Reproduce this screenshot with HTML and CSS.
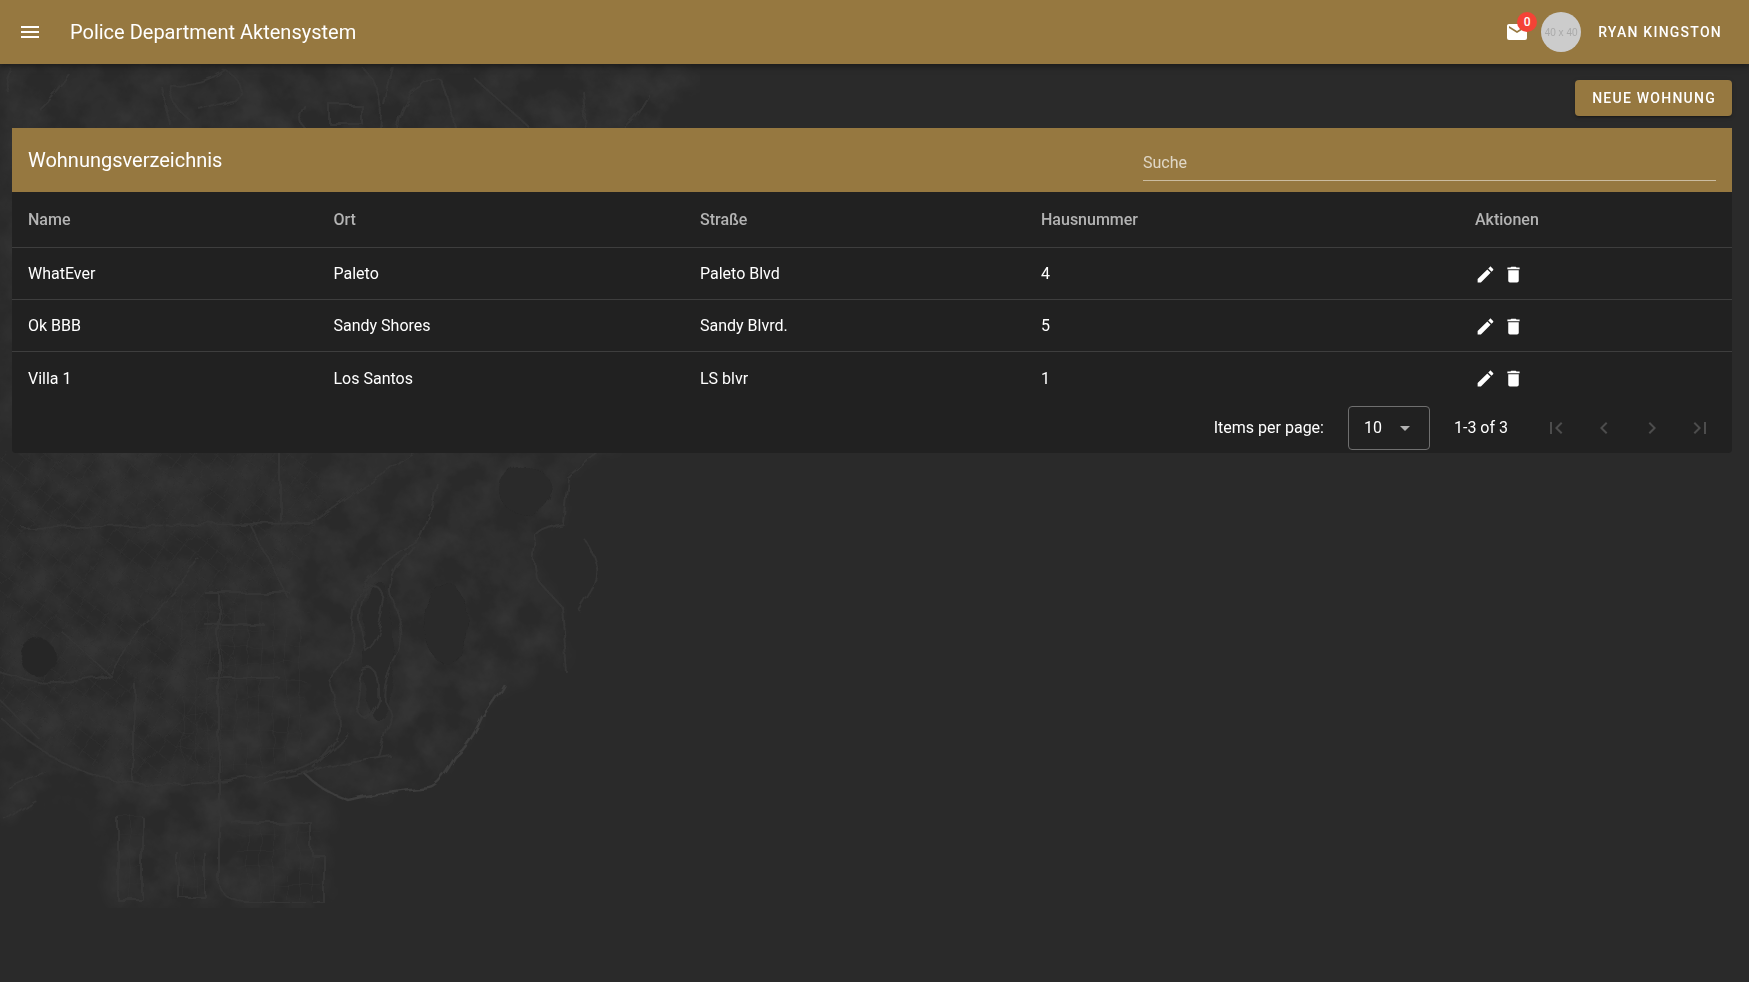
FILE: index.html
```html
<!DOCTYPE html>
<html lang="de">
<head>
    <meta charset="UTF-8">
    <meta name="viewport" content="width=device-width, initial-scale=1.0">
    <title>Police Department Aktensystem</title>
    <link rel="stylesheet" href="styles.css">
</head>
<body>
    <!-- Karte im Hintergrund -->
    <svg class="map" xmlns="http://www.w3.org/2000/svg" viewBox="0 0 1749 982" aria-hidden="true">
        <defs>
            <pattern id="blocks" width="15" height="15" patternUnits="userSpaceOnUse" patternTransform="rotate(38)">
                <path d="M0,0H15M0,0V15" fill="none" stroke="#323232" stroke-width="1.2" />
            </pattern>
            <pattern id="blocksFlat" width="13" height="17" patternUnits="userSpaceOnUse">
                <path d="M0,0H13M0,0V17" fill="none" stroke="#323232" stroke-width="1.2" />
            </pattern>
            <!-- fleckige Landfläche, Rand weich -->
            <filter id="mottle" x="0" y="0" width="100%" height="100%" color-interpolation-filters="sRGB">
                <feTurbulence type="fractalNoise" baseFrequency="0.03" numOctaves="5" seed="7" result="noise" />
                <feColorMatrix in="noise" type="matrix" values="0 0 0 0 1  0 0 0 0 1  0 0 0 0 1  0.1 0 0 0 -0.03" result="light" />
                <feGaussianBlur in="SourceAlpha" stdDeviation="10" result="soft" />
                <feComposite in="light" in2="soft" operator="in" />
            </filter>
            <!-- macht die Linien unruhig -->
            <filter id="wobble" x="0" y="0" width="100%" height="100%">
                <feTurbulence type="fractalNoise" baseFrequency="0.04" numOctaves="3" seed="3" result="wob" />
                <feDisplacementMap in="SourceGraphic" in2="wob" scale="9" />
                <feGaussianBlur stdDeviation="0.7" />
            </filter>
        </defs>

        <polygon class="land" filter="url(#mottle)" points="0,64 700,64 680,128 620,453 598,453 567,477 562,523 536,540 540,583 562,607 567,673 504,684 482,717 455,757 429,787 348,800 304,773 263,782 330,800 330,908 110,908 100,810 60,790 0,830" />

        <g filter="url(#wobble)">
            <!-- Stadtgebiet -->
            <polygon points="0,453 310,453 330,500 300,560 240,600 220,780 130,780 60,750 0,710" fill="url(#blocks)" />
            <polygon points="180,600 310,600 300,760 180,780" fill="url(#blocksFlat)" />
            <polygon points="236,826 322,826 322,900 236,900" fill="url(#blocksFlat)" />
            <polygon points="118,815 143,815 143,898 118,898" fill="url(#blocksFlat)" />
            <polygon points="178,853 205,853 205,895 178,895" fill="url(#blocksFlat)" />
            <ellipse cx="38" cy="657" rx="18" ry="18" fill="#282828" />
            <ellipse cx="378" cy="650" rx="15" ry="70" fill="#2a2a2a" />
            <ellipse cx="446" cy="623" rx="22" ry="40" fill="#292929" />
            <ellipse cx="525" cy="490" rx="26" ry="24" fill="#292929" />

            <!-- Straßen -->
            <g class="road">
                <path d="M22,528 L312,523 L370,483 L415,453" />
                <path d="M0,717 Q30,745 58,760 Q100,780 134,783 Q180,790 295,770 Q325,760 348,733" />
                <path d="M134,683 V783" />
                <path d="M219,593 V787" />
                <path d="M219,787 V880 Q220,900 245,903 H324 V855" />
                <path d="M232,823 H312 V855 H324" />
                <path d="M0,673 Q50,690 110,675 L100,680" />
                <path d="M60,630 L110,675 L130,640 L200,560" />
                <path d="M205,593 H290 M205,625 H265 M205,678 H280" />
                <path d="M280,440 V520 M250,525 L290,600" />
                <path d="M118,817 V900 H143 V817 M178,853 V897 H205 V853" />
                <path d="M10,790 L45,770 M5,820 L35,800 M40,740 L0,700" />
            </g>

            <!-- Flüsse und Küste -->
            <g class="coast">
                <path d="M437,483 Q430,520 420,540 Q370,570 357,597 Q350,630 353,653 Q340,670 330,680 Q340,710 339,730 Q330,750 312,767" />
                <path d="M415,547 L397,567 Q385,590 393,600 Q405,630 400,647 Q380,680 384,700 Q395,715 388,727 L379,757" />
                <path d="M365,590 Q375,575 385,600 Q380,640 365,650 Q355,620 365,590 M362,670 Q380,660 378,700 Q365,730 358,710 Z" />
                <path d="M598,453 L567,477 L562,523 Q530,530 536,540 Q530,570 540,583 L562,607 L567,673" />
                <path d="M585,540 Q605,570 590,590 L578,610" />
                <path class="bright" d="M504,684 Q495,700 482,717 Q470,745 455,757 Q440,785 429,787 Q390,790 348,800 Q320,790 304,773" />
                <path d="M263,782 L304,773 L330,765 L390,755" />
                <!-- Bereich oberhalb der Tabelle -->
                <path d="M9,93 Q5,80 13,70 M40,110 Q60,90 70,75 M160,85 Q165,110 170,125 M225,70 Q205,85 170,85 Q165,100 190,120" />
                <path d="M225,70 Q250,85 235,100 L200,110 M305,105 Q295,120 305,128" />
                <path d="M397,128 Q400,100 420,88 Q435,75 441,80 Q450,100 455,128" />
                <path d="M362,67 Q385,90 380,128 M393,67 L384,105 M473,77 L530,128" />
                <path d="M330,105 H362 V124 H330 Z" />
                <path d="M582,90 L585,128 M650,95 Q640,115 625,128" />
            </g>
        </g>
    </svg>

    <header class="topbar">
        <svg class="icon" viewBox="0 0 24 24"><path d="M3,6H21V8H3V6M3,11H21V13H3V11M3,16H21V18H3V16Z" /></svg>
        <div class="app-title">Police Department Aktensystem</div>
        <div class="spacer"></div>
        <div class="mail">
            <svg class="icon" viewBox="0 0 24 24"><path d="M20,8L12,13L4,8V6L12,11L20,6M20,4H4C2.89,4 2,4.89 2,6V18A2,2 0 0,0 4,20H20A2,2 0 0,0 22,18V6C22,4.89 21.1,4 20,4Z" /></svg>
            <span class="badge">0</span>
        </div>
        <div class="avatar">40 x 40</div>
        <div class="user-name">RYAN KINGSTON</div>
    </header>

    <main class="content">
        <div class="toolbar">
            <button class="btn-new">NEUE WOHNUNG</button>
        </div>

        <section class="card">
            <div class="card-head">
                <div class="card-title">Wohnungsverzeichnis</div>
                <div class="search">Suche</div>
            </div>

            <table class="data">
                <thead>
                    <tr>
                        <th>Name</th>
                        <th>Ort</th>
                        <th>Straße</th>
                        <th>Hausnummer</th>
                        <th>Aktionen</th>
                    </tr>
                </thead>
                <tbody>
                    <tr>
                        <td>WhatEver</td>
                        <td>Paleto</td>
                        <td>Paleto Blvd</td>
                        <td>4</td>
                        <td>
                            <div class="actions">
                                <svg class="icon-sm" viewBox="0 0 24 24"><path d="M20.71,7.04C21.1,6.65 21.1,6 20.71,5.63L18.37,3.29C18,2.9 17.35,2.9 16.96,3.29L15.12,5.12L18.87,8.87M3,17.25V21H6.75L17.81,9.93L14.06,6.18L3,17.25Z" /></svg>
                                <svg class="icon-sm" viewBox="0 0 24 24"><path d="M19,4H15.5L14.5,3H9.5L8.5,4H5V6H19M6,19A2,2 0 0,0 8,21H16A2,2 0 0,0 18,19V7H6V19Z" /></svg>
                            </div>
                        </td>
                    </tr>
                    <tr>
                        <td>Ok BBB</td>
                        <td>Sandy Shores</td>
                        <td>Sandy Blvrd.</td>
                        <td>5</td>
                        <td>
                            <div class="actions">
                                <svg class="icon-sm" viewBox="0 0 24 24"><path d="M20.71,7.04C21.1,6.65 21.1,6 20.71,5.63L18.37,3.29C18,2.9 17.35,2.9 16.96,3.29L15.12,5.12L18.87,8.87M3,17.25V21H6.75L17.81,9.93L14.06,6.18L3,17.25Z" /></svg>
                                <svg class="icon-sm" viewBox="0 0 24 24"><path d="M19,4H15.5L14.5,3H9.5L8.5,4H5V6H19M6,19A2,2 0 0,0 8,21H16A2,2 0 0,0 18,19V7H6V19Z" /></svg>
                            </div>
                        </td>
                    </tr>
                    <tr>
                        <td>Villa 1</td>
                        <td>Los Santos</td>
                        <td>LS blvr</td>
                        <td>1</td>
                        <td>
                            <div class="actions">
                                <svg class="icon-sm" viewBox="0 0 24 24"><path d="M20.71,7.04C21.1,6.65 21.1,6 20.71,5.63L18.37,3.29C18,2.9 17.35,2.9 16.96,3.29L15.12,5.12L18.87,8.87M3,17.25V21H6.75L17.81,9.93L14.06,6.18L3,17.25Z" /></svg>
                                <svg class="icon-sm" viewBox="0 0 24 24"><path d="M19,4H15.5L14.5,3H9.5L8.5,4H5V6H19M6,19A2,2 0 0,0 8,21H16A2,2 0 0,0 18,19V7H6V19Z" /></svg>
                            </div>
                        </td>
                    </tr>
                </tbody>
            </table>

            <div class="pager">
                <span>Items per page:</span>
                <div class="per-page">
                    <span>10</span>
                    <svg class="caret" viewBox="0 0 24 24"><path d="M7,10L12,15L17,10H7Z" /></svg>
                </div>
                <span class="range">1-3 of 3</span>
                <div class="pager-btns">
                    <svg class="icon-off" viewBox="0 0 24 24"><path d="M18.41,16.59L13.82,12L18.41,7.41L17,6L11,12L17,18L18.41,16.59M6,6H8V18H6V6Z" /></svg>
                    <svg class="icon-off" viewBox="0 0 24 24"><path d="M15.41,16.58L10.83,12L15.41,7.41L14,6L8,12L14,18L15.41,16.58Z" /></svg>
                    <svg class="icon-off" viewBox="0 0 24 24"><path d="M8.59,16.58L13.17,12L8.59,7.41L10,6L16,12L10,18L8.59,16.58Z" /></svg>
                    <svg class="icon-off" viewBox="0 0 24 24"><path d="M5.59,7.41L10.18,12L5.59,16.59L7,18L13,12L7,6L5.59,7.41M16,6H18V18H16V6Z" /></svg>
                </div>
            </div>
        </section>
    </main>
</body>
</html>
```

FILE: styles.css
```css
* {
    box-sizing: border-box;
}

body {
    margin: 0;
    height: 982px;
    overflow: hidden;
    background-color: #2a2a2a;
    color: #fff;
    font-family: Roboto, "Liberation Sans", sans-serif;
    font-size: 16px;
}

.map {
    position: fixed;
    top: 0;
    left: 0;
    width: 1749px;
    height: 982px;
    z-index: 0;
}

.land {
    fill: #292929;
}

.road,
.coast {
    fill: none;
    stroke-linejoin: round;
}

.road {
    stroke: #343434;
    stroke-width: 2;
}

.coast {
    stroke: #353535;
    stroke-width: 2;
}

.coast .bright {
    stroke: #3c3c3c;
    stroke-width: 2.5;
}

.topbar {
    position: relative;
    z-index: 2;
    display: flex;
    align-items: center;
    height: 64px;
    padding: 0 27px 0 18px;
    background-color: #967840;
    box-shadow: 0 2px 4px -1px rgba(0, 0, 0, .2), 0 4px 5px 0 rgba(0, 0, 0, .14), 0 1px 10px 0 rgba(0, 0, 0, .12);
}

.icon {
    display: block;
    width: 24px;
    height: 24px;
    fill: #fff;
}

.app-title {
    margin-left: 28px;
    font-size: 20px;
    font-weight: 400;
}

.spacer {
    flex: 1;
}

.mail {
    position: relative;
    width: 24px;
    height: 24px;
}

.badge {
    position: absolute;
    top: -8px;
    left: 12px;
    width: 20px;
    height: 20px;
    border-radius: 50%;
    background-color: #f44336;
    font-size: 12px;
    font-weight: 500;
    line-height: 20px;
    text-align: center;
}

.avatar {
    display: flex;
    align-items: center;
    justify-content: center;
    width: 40px;
    height: 40px;
    margin-left: 12px;
    border-radius: 50%;
    background-color: #ccc;
    color: #a9a9a9;
    font-family: "Liberation Sans", sans-serif;
    font-size: 10px;
}

.user-name {
    margin-left: 17px;
    font-size: 14px;
    font-weight: 500;
    letter-spacing: 1.25px;
}

.content {
    position: relative;
    z-index: 1;
    padding: 16px 17px 0 12px;
}

.toolbar {
    display: flex;
    justify-content: flex-end;
    margin-bottom: 12px;
}

.btn-new {
    height: 36px;
    padding: 0 16px 0 17px;
    border: none;
    border-radius: 4px;
    background-color: #967840;
    color: #fff;
    font-family: inherit;
    font-size: 14px;
    font-weight: 500;
    letter-spacing: 1.25px;
    box-shadow: 0 3px 1px -2px rgba(0, 0, 0, .2), 0 2px 2px 0 rgba(0, 0, 0, .14), 0 1px 5px 0 rgba(0, 0, 0, .12);
}

.card {
    background-color: #212121;
    border-radius: 0 0 4px 4px;
}

.card-head {
    display: flex;
    align-items: center;
    justify-content: space-between;
    height: 64px;
    padding: 0 16px;
    background-color: #967840;
}

.card-title {
    font-size: 20px;
    font-weight: 400;
}

.search {
    width: 573px;
    height: 38px;
    margin-top: 4px;
    padding-top: 8px;
    border-bottom: 1px solid rgba(255, 255, 255, .5);
    color: rgba(255, 255, 255, .7);
    font-size: 16px;
    line-height: 24px;
}

.data {
    width: 100%;
    table-layout: fixed;
    border-collapse: separate;
    border-spacing: 0;
    font-size: 16px;
}

.data th:nth-child(1) { width: 305.5px; }
.data th:nth-child(2) { width: 366.5px; }
.data th:nth-child(3) { width: 341px; }
.data th:nth-child(4) { width: 434px; }

.data th {
    height: 56px;
    padding: 0 16px;
    border-bottom: 1px solid #3e3e3e;
    color: #b3b3b3;
    font-weight: 500;
    text-align: left;
}

.data td {
    height: 52px;
    padding: 0 16px;
    border-bottom: 1px solid #3e3e3e;
}

.data tbody tr:last-child td {
    border-bottom: none;
}

.actions {
    display: flex;
    gap: 7px;
    margin-top: 1px;
}

.icon-sm {
    display: block;
    width: 21px;
    height: 21px;
    fill: #fff;
}

.pager {
    display: flex;
    align-items: center;
    justify-content: flex-end;
    height: 49px;
    padding: 0 8px 2px 0;
    font-size: 16px;
}

.per-page {
    display: flex;
    align-items: center;
    justify-content: space-between;
    width: 82px;
    height: 44px;
    margin-left: 24px;
    padding: 0 12px 0 15px;
    border: 1px solid #6f6f6f;
    border-radius: 4px;
}

.caret {
    width: 24px;
    height: 24px;
    fill: #b3b3b3;
}

.range {
    margin: 0 24px;
}

.pager-btns {
    display: flex;
}

.icon-off {
    display: block;
    width: 24px;
    height: 24px;
    margin: 0 12px;
    fill: #4d4d4d;
}
```
